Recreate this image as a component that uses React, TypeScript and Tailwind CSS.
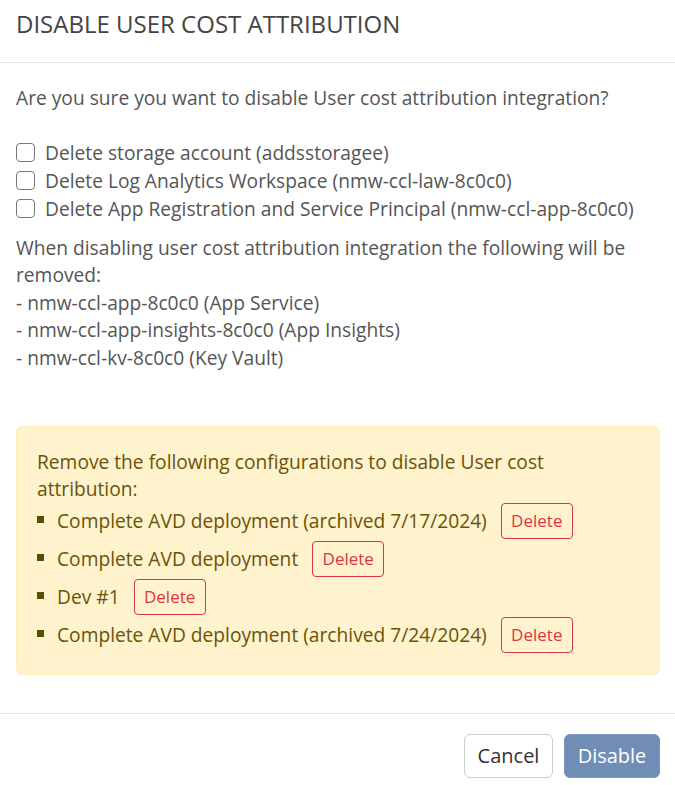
import React from "react";

const options = [
  "Delete storage account (addsstoragee)",
  "Delete Log Analytics Workspace (nmw-ccl-law-8c0c0)",
  "Delete App Registration and Service Principal (nmw-ccl-app-8c0c0)",
];

const removed = [
  "- nmw-ccl-app-8c0c0 (App Service)",
  "- nmw-ccl-app-insights-8c0c0 (App Insights)",
  "- nmw-ccl-kv-8c0c0 (Key Vault)",
];

const configs = [
  "Complete AVD deployment (archived 7/17/2024)",
  "Complete AVD deployment",
  "Dev #1",
  "Complete AVD deployment (archived 7/24/2024)",
];

export default function App() {
  return (
    <div
      className="w-[675px] h-[785px] overflow-hidden bg-white text-[19.2px] leading-[27.5px] text-[#555]"
      style={{ fontFamily: '"Open Sans", sans-serif' }}
    >
      {/* header */}
      <div className="h-[63px] border-b border-[#e6e6e6] px-4 pt-[6px]">
        <h2 className="text-[24px] leading-[36px] text-[#444]">DISABLE USER COST ATTRIBUTION</h2>
      </div>

      {/* body */}
      <div className="h-[650px] pl-4 pr-[15px] pt-[21px]">
        <p>Are you sure you want to disable User cost attribution integration?</p>

        <div className="mt-[27px] flex flex-col">
          {options.map((o) => (
            <label key={o} className="flex h-[28px] items-center gap-[10px]">
              <span className="h-[19px] w-[19px] rounded-[4px] border border-[#777] bg-white" />
              <span>{o}</span>
            </label>
          ))}
        </div>

        <div className="mt-[11px]">
          <p>When disabling user cost attribution integration the following will be removed:</p>
          {removed.map((r) => (
            <p key={r}>{r}</p>
          ))}
        </div>

        <div className="mt-[55px] rounded-[6px] border border-[#ffeeba] bg-[#fff3cd] px-5 pb-[20px] pt-[21px] text-[#6b5208]">
          <p className="leading-[27px]">Remove the following configurations to disable User cost attribution:</p>
          <ul>
            {configs.map((c) => (
              <li key={c} className="flex h-[38px] items-center">
                <span className="mr-[13px] -mt-[3px] h-[7px] w-[7px] shrink-0 bg-[#5e4a05]" />
                <span>{c}</span>
                <button className="ml-[14px] h-[36px] w-[72px] rounded-[4px] border border-[#dc3545] text-[17px] text-[#dc3545]">
                  Delete
                </button>
              </li>
            ))}
          </ul>
        </div>
      </div>

      {/* footer */}
      <div className="flex justify-end gap-[11px] border-t border-[#e6e6e6] pr-[15px] pt-[20px]">
        <button className="h-[44px] w-[89px] rounded-[6px] border border-[#ccc] bg-white text-[20px] text-[#333]">
          Cancel
        </button>
        <button className="h-[44px] w-[96px] rounded-[6px] border border-[#7b98c0] bg-[#6f8db5] text-[20px] text-white">
          Disable
        </button>
      </div>
    </div>
  );
}
